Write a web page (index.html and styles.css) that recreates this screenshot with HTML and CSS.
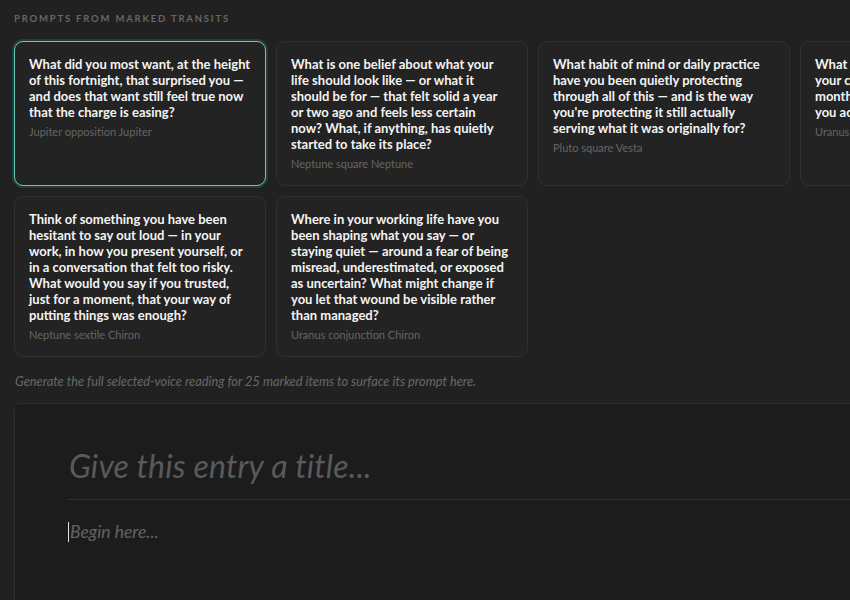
FILE: index.html
```html
<!DOCTYPE html>
<html>
<head>
<meta charset="utf-8">
<link rel="stylesheet" href="styles.css">
</head>
<body>
<div class="page">
  <div class="section-label">PROMPTS FROM MARKED TRANSITS</div>
  <div class="prompt-grid">
    <div class="prompt-card active">
      <div class="prompt-text">What did you most want, at the height of this fortnight, that surprised you — and does that want still feel true now that the charge is easing?</div>
      <div class="prompt-meta">Jupiter opposition Jupiter</div>
    </div>
    <div class="prompt-card">
      <div class="prompt-text">What is one belief about what your life should look like — or what it should be for — that felt solid a year<br>or two ago and feels less certain<br>now? What, if anything, has quietly started to take its place?</div>
      <div class="prompt-meta">Neptune square Neptune</div>
    </div>
    <div class="prompt-card">
      <div class="prompt-text">What habit of mind or daily practice have you been quietly protecting through all of this — and is the way you're protecting it still actually serving what it was originally for?</div>
      <div class="prompt-meta">Pluto square Vesta</div>
    </div>
    <div class="prompt-card">
      <div class="prompt-text">What loyalty are you still keeping to your commitments from these recent months, even in all the places where you act differently now?</div>
      <div class="prompt-meta">Uranus trine Moon</div>
    </div>
    <div class="prompt-card">
      <div class="prompt-text">Think of something you have been hesitant to say out loud — in your work, in how you present yourself, or in a conversation that felt too risky. What would you say if you trusted, just for a moment, that your way of putting things was enough?</div>
      <div class="prompt-meta">Neptune sextile Chiron</div>
    </div>
    <div class="prompt-card">
      <div class="prompt-text">Where in your working life have you been shaping what you say — or staying quiet — around a fear of being misread, underestimated, or exposed as uncertain? What might change if you let that wound be visible rather than managed?</div>
      <div class="prompt-meta">Uranus conjunction Chiron</div>
    </div>
  </div>
  <p class="hint">Generate the full selected-voice reading for 25 marked items to surface its prompt here.</p>
  <div class="editor">
    <div class="title-input">Give this entry a title...</div>
    <div class="body-input"><span class="caret"></span>Begin here...</div>
  </div>
</div>
</body>
</html>
```
FILE: styles.css
```css
html, body {
  margin: 0;
  padding: 0;
  background: #212121;
  overflow: hidden;
}
body {
  font-family: "Lato", "Liberation Sans", sans-serif;
  color: #f2f2f2;
}
.page {
  width: 1038px;
  padding: 12px 14px 0 14px;
}
.section-label {
  font-size: 9.5px;
  letter-spacing: 1.8px;
  color: #676767;
  font-weight: 700;
  line-height: 14px;
  margin-bottom: 15px;
}
.prompt-grid {
  display: grid;
  grid-template-columns: repeat(4, 252px);
  gap: 10px;
}
.prompt-card {
  background: #232323;
  border: 1px solid #303030;
  border-radius: 9px;
  padding: 14px 14px 14px 14px;
}
.prompt-card.active {
  border-color: #5fcdb8;
  box-shadow: 0 0 0 2px rgba(60, 140, 125, 0.25);
}
.prompt-text {
  font-size: 13px;
  line-height: 16px;
  font-weight: 700;
  color: #f4f4f4;
}
.prompt-meta {
  margin-top: 5px;
  font-size: 11px;
  line-height: 14px;
  color: #656565;
}
.hint {
  margin: 16px 0 0 1px;
  font-size: 12.8px;
  line-height: 16px;
  font-style: italic;
  color: #686868;
}
.editor {
  margin-top: 14px;
  background: #1c1c1c;
  border: 1px solid #2c2c2c;
  border-radius: 6px;
  padding: 44px 0 60px 53px;
  height: 300px;
}
.title-input {
  font-size: 32px;
  line-height: 36px;
  letter-spacing: 0.2px;
  font-style: italic;
  color: #5a5a5a;
  padding: 0 0 15px 1px;
  border-bottom: 1px solid #333333;
}
.body-input {
  margin-top: 20px;
  font-size: 17.5px;
  line-height: 24px;
  font-style: italic;
  color: #636363;
  display: flex;
  align-items: center;
}
.caret {
  display: inline-block;
  width: 1px;
  height: 20px;
  background: #e0e0e0;
  margin-right: 1px;
}
```
